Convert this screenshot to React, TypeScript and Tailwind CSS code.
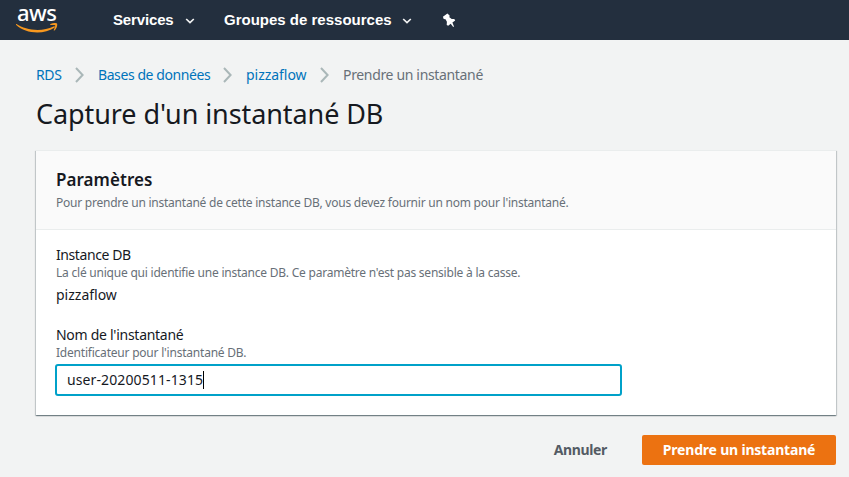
import type { ReactNode } from "react";

function AwsLogo() {
  return (
    <div className="flex h-10 w-[42px] flex-col">
      <span className="h-6 pl-px font-['Noto_Sans'] text-[22px] leading-6 font-medium tracking-[-0.6px] text-white">
        aws
      </span>
      <svg className="-mt-px block h-[12px] w-[42px]" viewBox="0 0 42 12" fill="none">
        <path d="M0.5 1C9.5 7.4 26 9.2 37.6 3.5C38.8 3 39.4 3.8 38.4 4.7C27.6 12 9.4 10.8 0.2 2C-0.3 1.4 0 0.7 0.5 1Z" fill="#f7981f" />
        <path d="M34.4 0.9C37.2 -0.4 40.4 -0.1 41 0.6C41.7 1.7 40.7 5.6 38.5 7.4C37.8 7.8 37.5 7.4 37.8 6.9C38.6 5.2 39.6 2.9 39.1 2.3C38.6 1.7 36.4 1.9 34.8 2C34.1 2.1 34 1.2 34.4 0.9Z" fill="#f7981f" />
      </svg>
    </div>
  );
}

function Caret() {
  return (
    <svg className="mt-[2px] block h-[6px] w-[10px]" viewBox="0 0 10 6" fill="none">
      <path d="M1.2 1L5 4.6L8.8 1" stroke="#f2f3f3" strokeWidth="1.7" />
    </svg>
  );
}

function Pin() {
  return (
    <svg className="block h-[15px] w-[14px]" viewBox="0 0 14 15" fill="#fff">
      <path d="M5.4 0.6L7.6 2.4L7.4 4.3L9.7 6.1L12.3 6L13.2 7.4L10.4 9.6L12 13.6L11.2 13.9L8.7 10.7L6.2 12.8L4.7 12L4.9 8.7L3.5 6.2L1.7 5.9L0.9 3.8Z" />
    </svg>
  );
}

function Separator() {
  return (
    <svg className="block h-[16px] w-[9px]" viewBox="0 0 9 16" fill="none">
      <path d="M1 1L7.6 8L1 15" stroke="#aab7b8" strokeWidth="2" />
    </svg>
  );
}

function Hint({ children, className }: { children: ReactNode; className: string }) {
  return <p className={`text-[12px] leading-[16px] whitespace-nowrap text-[#687078] ${className}`}>{children}</p>;
}

export default function App() {
  return (
    <div className="h-[477px] w-[849px] overflow-hidden bg-[#f2f3f3] font-['Noto_Sans',sans-serif] text-[14px] text-[#16191f]">
      <header className="flex h-10 items-center bg-[#232f3e] pl-4 font-['Liberation_Sans',Arial,sans-serif] text-[15px] font-bold text-white">
        <AwsLogo />
        <nav className="flex items-center whitespace-nowrap">
          <span className="ml-[55px] w-[72px] tracking-[-0.15px]">Services</span>
          <Caret />
          <span className="ml-[29px] w-[178px]">Groupes de ressources</span>
          <Caret />
          <span className="ml-[30px]">
            <Pin />
          </span>
        </nav>
      </header>

      <main className="pr-[13px] pl-9">
        <nav className="mt-[25px] flex h-5 items-center leading-5 whitespace-nowrap text-[#0073bb]">
          <a className="w-[39px] tracking-[-0.4px]">RDS</a>
          <Separator />
          <a className="ml-[14px] w-[125px] tracking-[-0.42px]">Bases de données</a>
          <Separator />
          <a className="ml-[14px] w-[74px] tracking-[-0.04px]">pizzaflow</a>
          <Separator />
          <span className="ml-[14px] tracking-[-0.34px] text-[#687078]">Prendre un instantané</span>
        </nav>

        <h1 className="mt-[11px] h-9 text-[27px] leading-9 font-normal tracking-[-0.09px] whitespace-nowrap">
          Capture d'un instantané DB
        </h1>

        <section className="mt-[18px] h-[265px] border-t border-[#eaeded] bg-white shadow-[0_1px_1px_0_rgba(0,28,36,0.35),1px_1px_1px_0_rgba(0,28,36,0.15),-1px_1px_1px_0_rgba(0,28,36,0.15)]">
          <div className="h-[79px] border-b border-[#eaeded] bg-[#fafafa] px-5 pt-[17px]">
            <h2 className="h-[27px] text-[17px] leading-[24px] font-semibold tracking-[0.05px]">Paramètres</h2>
            <Hint className="tracking-[-0.235px]">
              Pour prendre un instantané de cette instance DB, vous devez fournir un nom pour l'instantané.
            </Hint>
          </div>
          <div className="px-5 pt-[15px]">
            <p className="h-5 leading-5 tracking-[-0.42px]">Instance DB</p>
            <Hint className="tracking-[-0.22px]">
              La clé unique qui identifie une instance DB. Ce paramètre n'est pas sensible à la casse.
            </Hint>
            <p className="mt-[4px] h-5 leading-5">pizzaflow</p>
            <p className="mt-[20px] h-5 leading-5 tracking-[-0.28px]">Nom de l'instantané</p>
            <Hint className="tracking-[-0.215px]">Identificateur pour l'instantané DB.</Hint>
            <div className="mt-[3px] -ml-px flex h-8 w-[567px] items-center rounded-[3px] border-2 border-[#00a1c9] pl-[10px]">
              <span className="pb-px tracking-[0.11px]">user-20200511-1315</span>
              <span className="h-[18px] w-px bg-black" />
            </div>
          </div>
        </section>

        <div className="mt-[20px] flex h-[30px] items-center justify-end font-bold whitespace-nowrap">
          <button className="mr-[35px] pb-px tracking-[-0.35px] text-[#545b64]">Annuler</button>
          <button className="h-[30px] w-[194px] rounded-[2px] bg-[#ec7211] pb-px tracking-[-0.2px] text-white">
            Prendre un instantané
          </button>
        </div>
      </main>
    </div>
  );
}
